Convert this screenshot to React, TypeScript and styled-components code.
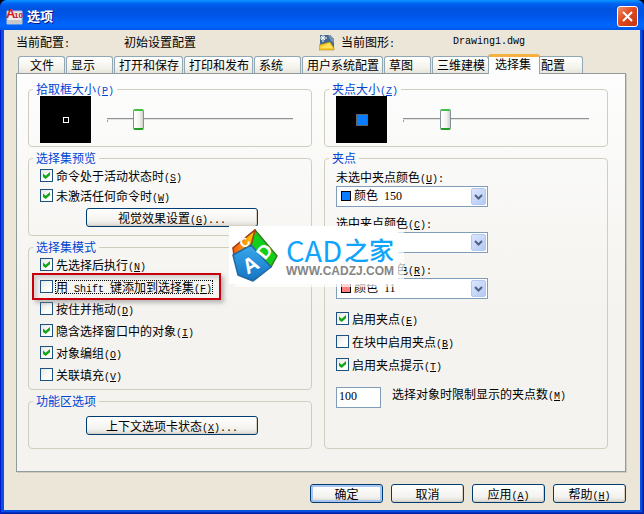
import React from "react";
import styled, { createGlobalStyle, css } from "styled-components";

const GlobalStyle = createGlobalStyle`
  * { box-sizing: border-box; }
  body { margin: 0; background: #000; }
  body, button, input, select {
    font-family: "Noto Sans CJK SC", sans-serif;
    font-size: 12px;
    line-height: 14px;
    color: #000;
  }
`;

const Window = styled.div`
  position: relative;
  display: flex;
  flex-direction: column;
  min-height: 100vh;
  background: #0a50e0;
  border-radius: 7px 7px 0 0;
  box-shadow: inset 1px 0 #0019cf, inset -1px -1px #001ea0, inset -2px -2px #0030c0;
  padding: 0 4px 4px;
`;

const TitleBar = styled.header`
  display: flex;
  align-items: center;
  gap: 4px;
  height: 30px;
  margin: 0 -4px;
  padding: 2px 6px 0;
  border-radius: 7px 7px 0 0;
  background: linear-gradient(#0997ff 0, #0060f0 4px, #0053e0 9px, #0055e8 16px, #0066ff 25px, #0058e8 30px);
`;

const Title = styled.h1`
  flex: 1;
  margin: 0;
  font-size: 13px;
  line-height: 18px;
  font-weight: 700;
  color: #fff;
  text-shadow: 1px 1px #0f1089;
`;

const CloseButton = styled.button`
  width: 21px;
  height: 21px;
  padding: 0;
  border: 1px solid #fff;
  border-radius: 3px;
  background: linear-gradient(135deg, #f0906c, #e04a20 45%, #c43410);
  svg { display: block; margin: auto; }
`;

const Body = styled.main`
  flex: 1;
  display: flex;
  flex-direction: column;
  padding: 0 14px 7px 12px;
  background: #ece6d8;
`;

const ProfileBar = styled.div`
  display: grid;
  grid-template-columns: 108px 1fr 22px 112px 173px;
  align-items: center;
  height: 24px;
`;

const Latin = styled.span`
  font-family: "Liberation Mono", monospace;
  font-size: 10px;
  line-height: 0;
  white-space: pre;
`;

const TabStrip = styled.div`
  display: flex;
  align-items: flex-end;
  gap: 1px;
  height: 19px;
  padding-left: 2px;
`;

const Tab = styled.button<{ $selected?: boolean; $centered?: boolean }>`
  height: 17px;
  min-width: 47px;
  padding: 0 3px 0 4px;
  border: 1px solid #91a7b4;
  border-bottom: 0;
  border-radius: 3px 3px 0 0;
  background: linear-gradient(#fff, #f3f2ea 70%, #e6e4da);
  text-align: ${(p) => (p.$centered ? "center" : "left")};
  white-space: nowrap;
  ${(p) =>
    p.$selected &&
    css`
      position: relative;
      z-index: 1;
      height: 20px;
      min-width: 52px;
      margin: 0 -5px -1px -2px;
      padding: 0 6px 4px;
      border-top: 3px solid #f5b040;
      background: #fdfdfd;
    `}
`;

const Panel = styled.section`
  flex: 1;
  display: grid;
  grid-template-columns: 1fr 1fr;
  gap: 12px;
  padding: 8px 17px 22px 11px;
  border: 1px solid #919b9c;
  background: linear-gradient(#fdfdfd, #f4f3ef 60%);
  box-shadow: 1px 1px #cfcbbf;
`;

const Column = styled.div`
  display: flex;
  flex-direction: column;
  gap: 4px;
  min-width: 0;
`;

const Group = styled.fieldset<{ $grow?: boolean }>`
  min-width: 0;
  margin: 0;
  padding: 0 11px 8px;
  border: 1px solid #d0cfbf;
  border-radius: 4px;
  ${(p) => p.$grow && css`flex: 1;`}
`;

const Legend = styled.legend`
  height: 14px;
  margin-left: -7px;
  padding: 0 3px;
  color: #0046d5;
`;

const SizeRow = styled.div`
  display: flex;
  align-items: center;
  gap: 16px;
  margin-bottom: -5px;
  padding-right: 7px;
`;

const Preview = styled.div`
  display: grid;
  place-items: center;
  width: 51px;
  height: 47px;
  background: #000;
`;

const PickBox = styled.div`
  width: 6px;
  height: 6px;
  border: 1px solid #fff;
`;

const GripBox = styled.div`
  width: 12px;
  height: 12px;
  border: 1px solid #606060;
  background: #0a7cff;
`;

const Slider = styled.input`
  flex: 1;
  min-width: 0;
  height: 21px;
  margin: 0;
  appearance: none;
  background: linear-gradient(#8d9199, #8d9199) 0 9px / 100% 1px no-repeat,
    linear-gradient(#e2e0d8, #e2e0d8) 0 10px / 100% 1px no-repeat,
    linear-gradient(#9d9c99, #9d9c99) 0 9px / 1px 4px no-repeat;
  &::-webkit-slider-thumb {
    appearance: none;
    width: 11px;
    height: 21px;
    border: 1px solid #80909c;
    border-top: 2px solid #40c040;
    border-bottom: 2px solid #20a020;
    border-radius: 2px;
    background: linear-gradient(90deg, #fff, #f3f3ef 60%, #d0d0c8);
  }
`;

const Checks = styled.div<{ $gap: number }>`
  display: flex;
  flex-direction: column;
  align-items: flex-start;
  gap: ${(p) => p.$gap}px;
  padding-top: 4px;
`;

const CheckLabel = styled.label<{ $marked?: boolean }>`
  display: flex;
  align-items: center;
  gap: 2px;
  height: 13px;
  white-space: nowrap;
  ${(p) =>
    p.$marked &&
    css`
      position: relative;
      &::after {
        content: "";
        position: absolute;
        inset: -7px -8px;
        border: 2px solid #c8000c;
        box-shadow: 3px 3px 4px #8888, inset 3px 3px 4px #9996;
      }
    `}
`;

const CheckText = styled.span<{ $focused?: boolean }>`
  padding: 0 1px;
  ${(p) => p.$focused && css`outline: 1px dotted #000; outline-offset: -1px;`}
`;

const CheckBox = styled.input`
  display: grid;
  place-items: center;
  width: 13px;
  height: 13px;
  margin: 0;
  appearance: none;
  border: 1px solid #1c5180;
  background: linear-gradient(135deg, #e6e6e2, #fff 70%);
  &:checked::after {
    content: "";
    width: 7px;
    height: 7px;
    background: #16a516;
    clip-path: polygon(0 22%, 0 70%, 38% 100%, 100% 48%, 100% 0, 38% 52%);
  }
`;

const PushButton = styled.button<{ $wide?: boolean; $default?: boolean }>`
  height: 19px;
  width: ${(p) => (p.$wide ? "172px" : "73px")};
  padding: 0;
  border: 1px solid #003c74;
  border-radius: 3px;
  background: linear-gradient(#fff, #f3f2ee 70%, #dcd8d0);
  white-space: nowrap;
  box-shadow: ${(p) => (p.$default ? "inset 0 0 0 2px #a8c4f0" : "inset -1px -1px #d6d0c5")};
`;

const ButtonRow = styled.div<{ $top: number }>`
  display: flex;
  justify-content: center;
  padding: ${(p) => p.$top}px 0 0 4px;
`;

const Fields = styled.div`
  display: flex;
  flex-direction: column;
  gap: 9px;
  padding: 5px 0 9px;
`;

const Field = styled.div`
  display: flex;
  flex-direction: column;
  gap: 2px;
`;

const Combo = styled.div`
  position: relative;
  width: 152px;
`;

const ComboSelect = styled.select`
  display: block;
  width: 100%;
  height: 21px;
  padding: 0 20px 1px 17px;
  appearance: none;
  border: 1px solid #7f9db9;
  border-radius: 0;
  background: #fff;
  font-family: "Liberation Serif", "Noto Sans CJK SC", serif;
`;

const Swatch = styled.span<{ $color: string }>`
  position: absolute;
  left: 5px;
  top: 5px;
  width: 10px;
  height: 10px;
  border: 1px solid #000;
  background: ${(p) => p.$color};
  pointer-events: none;
`;

const ComboArrow = styled.span`
  position: absolute;
  right: 2px;
  top: 2px;
  display: grid;
  place-items: center;
  width: 15px;
  height: 17px;
  border: 1px solid #b4c8f4;
  border-radius: 2px;
  background: linear-gradient(135deg, #dce6fe, #b4c9f5);
  pointer-events: none;
`;

const LimitRow = styled.div`
  display: flex;
  align-items: flex-start;
  gap: 11px;
  padding-top: 16px;
  white-space: nowrap;
`;

const TextBox = styled.input`
  width: 45px;
  height: 21px;
  padding: 0 2px 2px;
  border: 1px solid #7f9db9;
  background: #fff;
  font-family: "Liberation Serif", serif;
`;

const Footer = styled.footer`
  display: flex;
  justify-content: flex-end;
  gap: 8px;
  padding-top: 12px;
`;

const Watermark = styled.aside`
  position: absolute;
  z-index: 2;
  left: calc(50% - 93px);
  top: 226px;
  display: flex;
  gap: 8px;
  width: 169px;
  height: 58px;
  padding: 3px 2px;
  background: #fff;
  box-shadow: 6px 3px #ffffffb0;
  svg { flex: none; }
`;

const Brand = styled.div`
  display: flex;
  flex-direction: column;
  padding-top: 6px;
`;

const BrandName = styled.div`
  display: flex;
  gap: 2px;
  height: 29px;
  color: #10a4fa;
  font: 29px/29px "Noto Sans CJK SC", sans-serif;
  white-space: nowrap;
`;

const BrandCjk = styled.span`
  font-size: 25px;
  font-weight: 500;
`;

const BrandSite = styled.div`
  color: #858585;
  font: 700 12px/14px "Liberation Sans", sans-serif;
`;

const Key = ({ k, tail = "" }: { k: string; tail?: string }) => (
  <Latin>
    (<u>{k}</u>){tail}
  </Latin>
);

type CheckProps = { text: React.ReactNode; k: string; checked?: boolean; marked?: boolean };

const Check = ({ text, k, checked, marked }: CheckProps) => (
  <CheckLabel $marked={marked}>
    <CheckBox type="checkbox" defaultChecked={checked} />
    <CheckText $focused={marked}>
      {text}
      <Key k={k} />
    </CheckText>
  </CheckLabel>
);

type ColorFieldProps = { id: string; label: string; k: string; color: string; value: string };

const ColorField = ({ id, label, k, color, value }: ColorFieldProps) => (
  <Field>
    <label htmlFor={id}>
      {label}
      <Key k={k} tail=":" />
    </label>
    <Combo>
      <ComboSelect id={id}>
        <option>{value}</option>
      </ComboSelect>
      <Swatch $color={color} />
      <ComboArrow>
        <svg width="9" height="6" viewBox="0 0 9 6">
          <path d="M1 1l3.500 3.500L8 1" fill="none" stroke="#4d6185" strokeWidth="2" />
        </svg>
      </ComboArrow>
    </Combo>
  </Field>
);

const AppIcon = () => (
  <svg width="17" height="17" viewBox="0 0 17 17">
    <path d="M1 3h15v13H1z" fill="#ececee" stroke="#b8bcc4" />
    <path d="M1 12h15v4H1z" fill="#c8c8cc" />
    <text x="0" y="10" fontFamily="Liberation Sans" fontSize="13" fontWeight="700" fill="#d81818">A</text>
    <text x="8" y="10" fontFamily="Liberation Sans" fontSize="8" fontWeight="700" fill="#c01818">10</text>
  </svg>
);

const DrawingIcon = () => (
  <svg width="16" height="17" viewBox="0 0 16 17">
    <path d="M1 1h10l4 4v9H1z" fill="#456a91" />
    <path d="M9 1h2l4 4v4l-3-2z" fill="#7894ae" />
    <path d="M0 11L11 8L15 14v2H0z" fill="#f4c928" stroke="#b98a10" strokeWidth=".6" />
    <path d="M1 14l9-5 4 5z" fill="#ffe15a" />
    <path d="M4 1v7M1 4h7M2 2l4 4M6 2L2 6" stroke="#fff" />
  </svg>
);

const CubeLogo = () => (
  <svg width="47" height="54" viewBox="0 0 47 54">
    <defs>
      <linearGradient id="top" x1="0" x2="1">
        <stop offset="0" stopColor="#f05a14" />
        <stop offset="1" stopColor="#ffd400" />
      </linearGradient>
      <linearGradient id="front" x1="0" y1="0" x2="0" y2="1">
        <stop offset="0" stopColor="#3aa8ec" />
        <stop offset="1" stopColor="#1474c4" />
      </linearGradient>
    </defs>
    <g strokeLinejoin="round" strokeWidth="1.500">
      <path d="M24 1L2 19L20 16z" fill="url(#top)" stroke="#a83c14" />
      <path d="M24 1L46 27L40 38L20 16z" fill="#12cf1c" stroke="#347c20" />
      <path d="M24 1L2 19L3 27L20 16z" fill="url(#top)" stroke="#a83c14" />
      <path d="M2 26L20 16L40 38L22 52L7 46z" fill="url(#front)" stroke="#2468a0" />
    </g>
    <g fill="#fff" fontFamily="Liberation Sans" fontWeight="700" textAnchor="middle">
      <text fontSize="13" transform="translate(14 14) rotate(-40)" y="4">C</text>
      <text fontSize="19" transform="translate(33 22) rotate(-50)" y="7">D</text>
      <text fontSize="21" transform="translate(19 35) rotate(-30)" y="8">A</text>
    </g>
  </svg>
);

const tabs = ["文件", "显示", "打开和保存", "打印和发布", "系统", "用户系统配置", "草图", "三维建模", "选择集", "配置"];

export default function App() {
  return (
    <>
      <GlobalStyle />
      <Window>
        <TitleBar>
          <AppIcon />
          <Title>选项</Title>
          <CloseButton aria-label="关闭">
            <svg width="13" height="13" viewBox="0 0 13 13">
              <path d="M2 2l9 9M11 2l-9 9" stroke="#fff" strokeWidth="2" />
            </svg>
          </CloseButton>
        </TitleBar>
        <Body>
          <ProfileBar>
            <span>当前配置<Latin>:</Latin></span>
            <span>初始设置配置</span>
            <DrawingIcon />
            <span>当前图形<Latin>:</Latin></span>
            <Latin>Drawing1.dwg</Latin>
          </ProfileBar>
          <TabStrip role="tablist">
            {tabs.map((name, i) => (
              <Tab key={name} role="tab" aria-selected={name === "选择集"} $selected={name === "选择集"} $centered={i === 0}>
                {name}
              </Tab>
            ))}
          </TabStrip>
          <Panel>
            <Column>
              <Group>
                <Legend>拾取框大小<Key k="P" /></Legend>
                <SizeRow>
                  <Preview><PickBox /></Preview>
                  <Slider type="range" aria-label="拾取框大小" defaultValue={15} />
                </SizeRow>
              </Group>
              <Group>
                <Legend>选择集预览</Legend>
                <Checks $gap={7}>
                  <Check text="命令处于活动状态时" k="S" checked />
                  <Check text="未激活任何命令时" k="W" checked />
                </Checks>
                <ButtonRow $top={6}>
                  <PushButton $wide>视觉效果设置<Key k="G" tail="..." /></PushButton>
                </ButtonRow>
              </Group>
              <Group>
                <Legend>选择集模式</Legend>
                <Checks $gap={9}>
                  <Check text="先选择后执行" k="N" checked />
                  <Check text={<>用<Latin> Shift </Latin>键添加到选择集</>} k="F" marked />
                  <Check text="按住并拖动" k="D" />
                  <Check text="隐含选择窗口中的对象" k="I" checked />
                  <Check text="对象编组" k="O" checked />
                  <Check text="关联填充" k="V" />
                </Checks>
              </Group>
              <Group $grow>
                <Legend>功能区选项</Legend>
                <ButtonRow $top={8}>
                  <PushButton $wide>上下文选项卡状态<Key k="X" tail="..." /></PushButton>
                </ButtonRow>
              </Group>
            </Column>
            <Column>
              <Group>
                <Legend>夹点大小<Key k="Z" /></Legend>
                <SizeRow>
                  <Preview><GripBox /></Preview>
                  <Slider type="range" aria-label="夹点大小" defaultValue={21} />
                </SizeRow>
              </Group>
              <Group $grow>
                <Legend>夹点</Legend>
                <Fields>
                  <ColorField id="unselected" label="未选中夹点颜色" k="U" color="#0a7cff" value={"颜色\u00a0\u00a0150"} />
                  <ColorField id="selected" label="选中夹点颜色" k="C" color="#c00000" value={"颜色\u00a0\u00a012"} />
                  <ColorField id="hover" label="悬停夹点颜色" k="R" color="#ff7f7f" value={"颜色\u00a0\u00a011"} />
                </Fields>
                <Checks $gap={10}>
                  <Check text="启用夹点" k="E" checked />
                  <Check text="在块中启用夹点" k="B" />
                  <Check text="启用夹点提示" k="T" checked />
                </Checks>
                <LimitRow>
                  <TextBox id="limit" defaultValue="100" />
                  <label htmlFor="limit">选择对象时限制显示的夹点数<Key k="M" /></label>
                </LimitRow>
              </Group>
            </Column>
          </Panel>
          <Footer>
            <PushButton $default>确定</PushButton>
            <PushButton>取消</PushButton>
            <PushButton>应用<Key k="A" /></PushButton>
            <PushButton>帮助<Key k="H" /></PushButton>
          </Footer>
        </Body>
        <Watermark>
          <CubeLogo />
          <Brand>
            <BrandName>CAD<BrandCjk>之家</BrandCjk></BrandName>
            <BrandSite>WWW.CADZJ.COM</BrandSite>
          </Brand>
        </Watermark>
      </Window>
    </>
  );
}
